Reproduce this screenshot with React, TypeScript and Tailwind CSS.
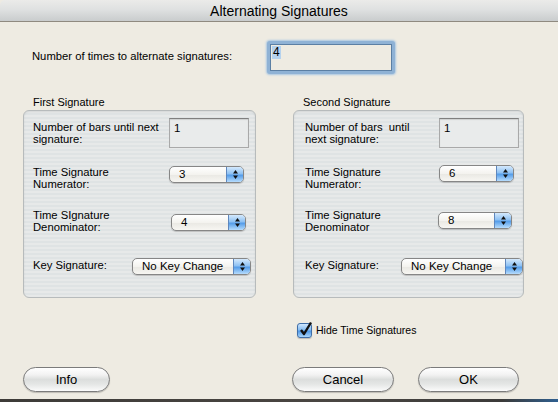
import type { ReactNode } from 'react'

const font = "font-['Liberation_Sans','Arial',sans-serif]"

function Arrows() {
  return (
    <svg width="7" height="11" viewBox="0 0 7 11" aria-hidden="true">
      <path d="M3.5 1 L6 4.5 L1 4.5 Z" fill="#111" />
      <path d="M3.5 10 L6 6.5 L1 6.5 Z" fill="#111" />
    </svg>
  )
}

function Popup({ value, className }: { value: string; className: string }) {
  return (
    <div
      className={`flex h-[17px] shrink-0 overflow-hidden rounded-[5px] border border-[#868686] bg-[linear-gradient(#ffffff,#f4f3ef_50%,#e9e8e3_51%,#f7f6f2)] shadow-[0_1px_1px_rgba(0,0,0,0.18)] ${className}`}
    >
      <span className="flex-1 pl-[9px] text-[11.5px] leading-[14px] text-black">{value}</span>
      <span className="flex w-[17px] items-center justify-center border-l border-[#5f87bd] bg-[linear-gradient(#d4e9fd,#8ec1f3_45%,#559de9_55%,#b6dcfd)]">
        <Arrows />
      </span>
    </div>
  )
}

function Field({ value }: { value: string }) {
  return (
    <div className="h-[30px] w-[80px] shrink-0 border border-[#a9a9a9] border-t-[#7f7f7f] bg-[#e9ebeb] pl-[4px] pt-[2px] text-[11.5px] leading-[14px] shadow-[inset_0_1px_1px_rgba(0,0,0,0.12)]">
      {value}
    </div>
  )
}

function Label({ children, className }: { children: ReactNode; className: string }) {
  return <div className={`shrink-0 text-[11.25px] leading-[12px] text-black ${className}`}>{children}</div>
}

function GroupBox({ title, children }: { title: string; children: ReactNode }) {
  return (
    <div className="flex flex-col">
      <div className="h-[13px] pl-[10px] text-[11px] leading-[13px]">{title}</div>
      <div className="mt-[1px] h-[188px] rounded-[6px] border border-[#b7bbbc] bg-[repeating-linear-gradient(#e7e9e9_0px,#e7e9e9_2px,#dfe3e4_2px,#dfe3e4_4px)] shadow-[inset_0_1px_2px_rgba(0,0,0,0.08)]">
        {children}
      </div>
    </div>
  )
}

function AquaButton({ label, className }: { label: string; className: string }) {
  return (
    <button
      className={`h-[25px] rounded-full border border-[#7b7b7b] bg-[linear-gradient(#ffffff,#f2f2f2_30%,#dcdedd_50%,#e4e6e5_70%,#fbfbfb)] text-[13px] leading-[22px] text-black shadow-[0_1px_1px_rgba(0,0,0,0.2)] ${className}`}
    >
      {label}
    </button>
  )
}

export default function App() {
  return (
    <div className={`flex h-[402px] w-[558px] flex-col overflow-hidden bg-[#eeebe2] text-black ${font}`}>
      <div className="flex h-[22px] shrink-0 items-center justify-center rounded-tl-[5px] border-b border-[#8f8a80] bg-[linear-gradient(#ebebe9,#dfe1e1_45%,#c9cccd)] text-[14px] leading-[16px]">
        Alternating Signatures
      </div>

      <div className="flex pl-[32px] pt-[19px]">
        <div className="mt-[8px] w-[235px] text-[11.25px] leading-[14px]">Number of times to alternate signatures:</div>
        <div className="h-[33px] w-[128px] rounded-[3px] bg-[#8fb2d5] p-[3px] shadow-[0_0_2px_1px_#a9c6e2]">
          <div className="h-full border border-[#5b7fa4] bg-[#eeebe2] pl-[1px] pt-[1px] text-[12px] leading-[13px]">
            <span className="inline-block bg-[#b5d2ee] px-[1px] leading-[13px]">4</span>
          </div>
        </div>
      </div>

      <div className="mt-[22px] flex gap-[37px] pl-[23px]">
        <div className="w-[233px]">
          <GroupBox title="First Signature">
            <div className="flex pl-[9px] pt-[7px]">
              <Label className="mt-[3px] w-[136px]">
                Number of bars until next
                <br />
                signature:
              </Label>
              <Field value="1" />
            </div>
            <div className="mt-[18px] flex items-start pl-[9px]">
              <Label className="w-[136px]">
                Time Signature
                <br />
                Numerator:
              </Label>
              <Popup value="3" className="w-[75px]" />
            </div>
            <div className="mt-[19px] flex items-start pl-[9px]">
              <Label className="w-[138px]">
                Time SIgnature
                <br />
                Denominator:
              </Label>
              <Popup value="4" className="mt-[5px] w-[75px]" />
            </div>
            <div className="mt-[25px] flex items-start pl-[9px]">
              <Label className="mt-[1px] w-[99px]">Key Signature:</Label>
              <Popup value="No Key Change" className="w-[119px]" />
            </div>
          </GroupBox>
        </div>

        <div className="w-[231px]">
          <GroupBox title="Second Signature">
            <div className="flex pl-[11px] pt-[7px]">
              <Label className="mt-[3px] w-[134px] whitespace-pre">
                {'Number of bars  until'}
                <br />
                next signature:
              </Label>
              <Field value="1" />
            </div>
            <div className="mt-[17px] flex items-start pl-[11px]">
              <Label className="mt-[1px] w-[134px]">
                Time Signature
                <br />
                Numerator:
              </Label>
              <Popup value="6" className="w-[75px]" />
            </div>
            <div className="mt-[19px] flex items-start pl-[11px]">
              <Label className="w-[133px]">
                Time Signature
                <br />
                Denominator
              </Label>
              <Popup value="8" className="mt-[3px] w-[74px]" />
            </div>
            <div className="mt-[25px] flex items-start pl-[11px]">
              <Label className="mt-[1px] w-[96px]">Key Signature:</Label>
              <Popup value="No Key Change" className="w-[122px]" />
            </div>
          </GroupBox>
        </div>
      </div>

      <div className="mt-[25px] flex items-center pl-[297px]">
        <div className="relative h-[15px] w-[15px] rounded-[3px] border border-[#3f6ea8] bg-[linear-gradient(#cfe6fd,#86bdf2_45%,#4f97e6_55%,#a9d6fb)] shadow-[0_1px_1px_rgba(0,0,0,0.2)]">
          <svg className="absolute -top-[3px] left-[1px]" width="14" height="16" viewBox="0 0 14 16" aria-hidden="true">
            <path d="M2 9 L5 13 L12 1.5" fill="none" stroke="#111" strokeWidth="2.4" strokeLinejoin="round" />
          </svg>
        </div>
        <span className="ml-[4px] text-[10.5px] leading-[13px]">Hide Time Signatures</span>
      </div>

      <div className="mt-[29px] flex pl-[23px]">
        <AquaButton label="Info" className="w-[87px]" />
        <AquaButton label="Cancel" className="ml-[182px] w-[102px]" />
        <AquaButton label="OK" className="ml-[24px] w-[101px]" />
      </div>

      <div className="mt-auto h-[3px] bg-[linear-gradient(90deg,#3d3b38,#4a4642_60%,#3b3a39_90%,#2f5f8f)]" />
    </div>
  )
}
